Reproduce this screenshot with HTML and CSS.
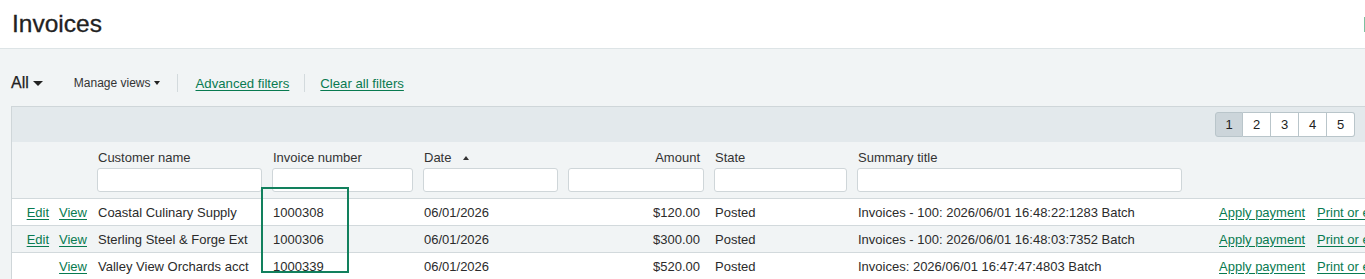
FILE: index.html
```html
<!DOCTYPE html>
<html lang="en">
<head>
    <meta charset="UTF-8">
    <meta name="viewport" content="width=device-width, initial-scale=1.0">
    <title>Invoices</title>
    <link rel="stylesheet" href="styles.css">
</head>
<body>
    <div class="page">
        <header class="page-header">
            <h1>Invoices</h1>
            <button class="header-btn" type="button" aria-label="Add"></button>
        </header>

        <main class="content">
            <!-- Vistas y filtros -->
            <div class="toolbar">
                <span class="view-select">All <span class="caret caret-lg"></span></span>
                <span class="manage">Manage views <span class="caret caret-sm"></span></span>
                <span class="sep"></span>
                <a href="#" class="link adv">Advanced filters</a>
                <span class="sep"></span>
                <a href="#" class="link">Clear all filters</a>
            </div>

            <!-- Tabla de facturas -->
            <div class="grid">
                <div class="grid-top">
                    <div class="pager">
                        <button class="active" type="button">1</button>
                        <button type="button">2</button>
                        <button type="button">3</button>
                        <button type="button">4</button>
                        <button type="button">5</button>
                    </div>
                </div>

                <table>
                    <colgroup>
                        <col class="c-actions">
                        <col class="c-customer">
                        <col class="c-number">
                        <col class="c-date">
                        <col class="c-amount">
                        <col class="c-state">
                        <col class="c-summary">
                        <col class="c-links">
                    </colgroup>
                    <thead>
                        <tr>
                            <th></th>
                            <th><span class="label">Customer name</span><input type="text"></th>
                            <th><span class="label">Invoice number</span><input type="text"></th>
                            <th><span class="label">Date <span class="sort-up"></span></span><input type="text"></th>
                            <th class="num"><span class="label">Amount</span><input type="text"></th>
                            <th><span class="label">State</span><input type="text"></th>
                            <th><span class="label">Summary title</span><input type="text"></th>
                            <th></th>
                        </tr>
                    </thead>
                    <tbody>
                        <tr>
                            <td class="row-actions"><a href="#" class="link">Edit</a><a href="#" class="link">View</a></td>
                            <td>Coastal Culinary Supply</td>
                            <td>1000308</td>
                            <td>06/01/2026</td>
                            <td class="num">$120.00</td>
                            <td>Posted</td>
                            <td>Invoices - 100: 2026/06/01 16:48:22:1283 Batch</td>
                            <td class="row-links"><a href="#" class="link">Apply payment</a><a href="#" class="link">Print or email</a></td>
                        </tr>
                        <tr class="alt">
                            <td class="row-actions"><a href="#" class="link">Edit</a><a href="#" class="link">View</a></td>
                            <td>Sterling Steel &amp; Forge Ext</td>
                            <td>1000306</td>
                            <td>06/01/2026</td>
                            <td class="num">$300.00</td>
                            <td>Posted</td>
                            <td>Invoices - 100: 2026/06/01 16:48:03:7352 Batch</td>
                            <td class="row-links"><a href="#" class="link">Apply payment</a><a href="#" class="link">Print or email</a></td>
                        </tr>
                        <tr>
                            <td class="row-actions"><a href="#" class="link">View</a></td>
                            <td>Valley View Orchards acct</td>
                            <td>1000339</td>
                            <td>06/01/2026</td>
                            <td class="num">$520.00</td>
                            <td>Posted</td>
                            <td>Invoices: 2026/06/01 16:47:47:4803 Batch</td>
                            <td class="row-links"><a href="#" class="link">Apply payment</a><a href="#" class="link">Print or email</a></td>
                        </tr>
                    </tbody>
                </table>

                <!-- Resaltado de la columna -->
                <div class="highlight"></div>
            </div>
        </main>
    </div>
</body>
</html>
```

FILE: styles.css
```css
/* General */
html, body {
    margin: 0;
    overflow: hidden;
}

body {
    font-family: "Liberation Sans", Arial, sans-serif;
    color: #2b2b2b;
    background: #f1f4f5;
}

.page {
    width: 100vw;
    overflow: hidden;
}

/* Encabezado */
.page-header {
    display: flex;
    align-items: center;
    background: #ffffff;
    border-bottom: 1px solid #dde4e6;
    padding: 10px 0 10px 12px;
}

.page-header h1 {
    margin: 0;
    font-size: 24.5px;
    line-height: 28px;
    font-weight: normal;
    color: #222;
    -webkit-text-stroke: 0.3px #222;
}

.header-btn {
    margin-left: auto;
    margin-right: -99px;
    width: 100px;
    height: 15px;
    padding: 0;
    border: 1px solid #7cc0a0;
    background: #ffffff;
}

/* Barra de vistas */
.toolbar {
    display: flex;
    align-items: center;
    height: 24px;
    padding: 22px 11px 11px;
}

.view-select {
    font-size: 16px;
    color: #222;
    margin-right: 31px;
    display: flex;
    align-items: center;
    -webkit-text-stroke: 0.25px #222;
}

.manage {
    font-size: 12px;
    color: #333;
    display: flex;
    align-items: center;
    margin-right: 2px;
}

.caret {
    display: inline-block;
    width: 0;
    height: 0;
    border-left: 5px solid transparent;
    border-right: 5px solid transparent;
    border-top: 5px solid #222;
    margin-left: 4px;
}

.caret-sm {
    border-left-width: 3.5px;
    border-right-width: 3.5px;
    border-top-width: 4px;
    margin-left: 3px;
}

.sep {
    width: 1px;
    height: 18px;
    background: #d3dadd;
    margin: 0 15px;
}

.toolbar .link {
    font-size: 13.2px;
}

.toolbar .adv {
    margin-left: 3px;
}

.link {
    color: #087a50;
    font-size: 13px;
    text-decoration: underline;
    text-underline-offset: 2px;
}

/* Tabla */
.grid {
    position: relative;
    margin-left: 11px;
    width: max-content;
    border: 1px solid #cfd6d9;
    background: #f1f4f5;
}

.grid-top {
    width: calc(100vw - 12px);
    background: #e3e9ec;
    padding: 5px 10px 5px 0;
    box-sizing: border-box;
    display: flex;
    justify-content: flex-end;
}

.pager {
    display: flex;
}

.pager button {
    width: 28px;
    height: 25px;
    padding: 0;
    font-family: inherit;
    font-size: 13px;
    color: #222;
    background: #ffffff;
    border: 1px solid #b9c5ca;
    border-left: none;
}

.pager button:first-child {
    border-left: 1px solid #b9c5ca;
    border-radius: 3px 0 0 3px;
}

.pager button:last-child {
    border-radius: 0 3px 3px 0;
}

.pager button.active {
    background: #ccd5da;
}

table {
    border-collapse: separate;
    border-spacing: 0;
    table-layout: fixed;
    width: 1435px;
    font-size: 13px;
}

.c-actions { width: 80px; }
.c-customer { width: 175px; }
.c-number { width: 151px; }
.c-date { width: 145px; }
.c-amount { width: 146px; }
.c-state { width: 143px; }
.c-summary { width: 335px; }
.c-links { width: 260px; }

th {
    font-weight: normal;
    text-align: left;
    color: #333;
    padding: 7px 5px 6px;
    border-bottom: 1px solid #d2d9dc;
    vertical-align: top;
}

th .label {
    display: block;
    line-height: 17px;
    margin-bottom: 2px;
    padding-left: 1px;
    white-space: nowrap;
}

th.num .label {
    text-align: right;
    padding-right: 4px;
}

th input {
    display: block;
    width: 100%;
    height: 24px;
    box-sizing: border-box;
    border: 1px solid #cfd6d9;
    border-radius: 3px;
    background: #ffffff;
    margin: 0;
}

.sort-up {
    display: inline-block;
    width: 0;
    height: 0;
    border-left: 3.5px solid transparent;
    border-right: 3.5px solid transparent;
    border-bottom: 4px solid #333;
    margin-left: 8px;
    vertical-align: 2px;
}

td {
    height: 26px;
    padding: 0 5px 0 6px;
    color: #2b2b2b;
    background: #ffffff;
    border-bottom: 1px solid #d2d9dc;
    white-space: nowrap;
    overflow: hidden;
}

tr.alt td {
    background: #f1f4f5;
}

td.num {
    text-align: right;
    padding-right: 9px;
}

.row-actions {
    text-align: right;
}

.row-actions .link + .link {
    margin-left: 10px;
}

.row-links {
    padding-left: 32px;
}

.row-links .link + .link {
    margin-left: 12px;
}

/* Resaltado */
.highlight {
    position: absolute;
    left: 249px;
    top: 80px;
    width: 88px;
    height: 86px;
    box-sizing: border-box;
    border: 2px solid #12805d;
    pointer-events: none;
}
```
